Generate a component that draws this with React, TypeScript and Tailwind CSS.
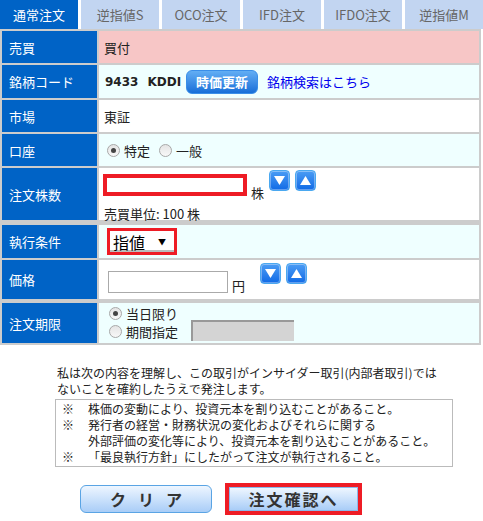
import React from 'react';

const tabs = ['通常注文', '逆指値S', 'OCO注文', 'IFD注文', 'IFDO注文', '逆指値M'];

const Radio: React.FC<{ checked?: boolean; label: string }> = ({ checked, label }) => (
    <span className="inline-flex items-center gap-[4px]">
        <span className="w-[13px] h-[13px] rounded-full border border-[#a8a8a8] bg-gradient-to-b from-[#e4e4e4] to-[#f8f8f8] flex items-center justify-center">
            {checked && <span className="w-[5px] h-[5px] rounded-full bg-[#444]" />}
        </span>
        <span>{label}</span>
    </span>
);

const Arrow: React.FC<{ up?: boolean }> = ({ up }) => (
    <span className="w-[21px] h-[21px] rounded-[4px] border border-[#4aa8f0] bg-gradient-to-b from-[#4a9cf4] to-[#0e6ae6] flex items-center justify-center shadow-[inset_0_0_0_1px_rgba(255,255,255,0.35)]">
        <svg width="11" height="9" viewBox="0 0 11 9">
            {up ? <polygon points="5.5,0 11,9 0,9" fill="white" /> : <polygon points="0,0 11,0 5.5,9" fill="white" />}
        </svg>
    </span>
);

const Label: React.FC<{ children: React.ReactNode }> = ({ children }) => (
    <div className="bg-[#0063c6] text-white text-[13px] pl-[7px] flex items-center">{children}</div>
);

export default function App() {
    return (
        <div className="w-[483px] h-[521px] bg-white text-[#222] font-['Noto_Sans_CJK_JP',sans-serif] text-[13px] leading-none overflow-hidden">
            <div className="flex gap-[3px] h-[29px]">
                {tabs.map((t, i) => (
                    <div
                        key={t}
                        className={`flex-1 flex items-center justify-center text-[13px] ${i === 0 ? 'bg-[#0063c6] text-white' : 'bg-[#c2d5f1] text-[#666]'}`}
                    >
                        {t}
                    </div>
                ))}
            </div>

            <div className="w-[481px] bg-[#cccccc] p-[2px] grid grid-cols-[95px_1fr] gap-[2px]">
                <Label>売買</Label>
                <div className="bg-[#f7c6c6] h-[32px] flex items-center pl-[5px]">買付</div>

                <Label>銘柄コード</Label>
                <div className="bg-[#efffff] h-[33px] flex items-center pl-[6px]">
                    <span className="font-['DejaVu_Sans',sans-serif] font-bold text-[12px] text-[#222]">9433</span>
                    <span className="ml-[9px] font-['DejaVu_Sans',sans-serif] font-bold text-[12px] text-[#222]">KDDI</span>
                    <span className="ml-[5px] w-[72px] h-[24px] rounded-[6px] border border-[#3a8ee8] bg-gradient-to-b from-[#62aef4] to-[#166ed8] text-white font-bold text-[13px] flex items-center justify-center">時価更新</span>
                    <span className="text-[#0000ee] ml-[9px]">銘柄検索はこちら</span>
                </div>

                <Label>市場</Label>
                <div className="bg-white h-[32px] flex items-center pl-[5px]">東証</div>

                <Label>口座</Label>
                <div className="bg-[#efffff] h-[32px] flex items-center pl-[8px] gap-[9px]">
                    <Radio checked label="特定" />
                    <Radio label="一般" />
                </div>

                <Label>注文株数</Label>
                <div className="bg-white h-[52px] pl-[4px] pt-[3px]">
                    <div className="flex items-start">
                        <div className="mt-[3px] w-[144px] h-[22px] border-[4px] border-[#ee1c25] bg-white" />
                        <span className="mt-[15px] ml-[4px]">株</span>
                        <div className="ml-[5px] -mt-[1px] flex gap-[5px]">
                            <Arrow />
                            <Arrow up />
                        </div>
                    </div>
                    <div className="mt-[8px] ml-[1px]">売買単位: 100 株</div>
                </div>
            </div>

            <div className="w-[481px] bg-[#cccccc] p-[2px] pt-[3px] grid grid-cols-[95px_1fr] gap-[2px]">
                <Label>執行条件</Label>
                <div className="bg-[#efffff] h-[33px] flex items-center pl-[8px]">
                    <div className="w-[70px] h-[27px] border-[3px] border-[#ee1c25] bg-white flex items-center justify-between pl-[3px] pr-[8px] shadow-[inset_0_-2px_0_#bbb]">
                        <span className="text-[16px] text-black">指値</span>
                        <span className="text-[8px] text-black">▼</span>
                    </div>
                </div>

                <Label>価格</Label>
                <div className="bg-white h-[39px] pl-[9px] flex items-start">
                    <div className="mt-[11px] w-[120px] h-[22px] border border-[#aaaaaa] bg-white" />
                    <span className="mt-[19px] ml-[4px]">円</span>
                    <div className="ml-[15px] mt-[3px] flex gap-[5px]">
                        <Arrow />
                        <Arrow up />
                    </div>
                </div>
            </div>

            <div className="w-[481px] bg-[#cccccc] p-[2px] grid grid-cols-[95px_1fr] gap-[2px]">
                <Label>注文期限</Label>
                <div className="bg-[#efffff] h-[40px] pl-[10px] flex items-start">
                    <div className="flex flex-col gap-[5px] pt-[4px]">
                        <Radio checked label="当日限り" />
                        <Radio label="期間指定" />
                    </div>
                    <div className="ml-[13px] mt-[17px] w-[103px] h-[21px] bg-[#d4d4d4] border-t-[2px] border-l-[2px] border-[#999999]" />
                </div>
            </div>

            <div className="ml-[57px] mt-[20px] text-[12px] leading-[16px] text-[#222]">
                私は次の内容を理解し、この取引がインサイダー取引(内部者取引)では
                <br />
                ないことを確約したうえで発注します。
            </div>
            <div className="ml-[55px] mt-[2px] w-[398px] border border-[#bbbbbb] px-[6px] py-[1px] text-[12px] leading-[16px]">
                <div className="flex"><span className="w-[26px]">※</span><span>株価の変動により、投資元本を割り込むことがあること。</span></div>
                <div className="flex"><span className="w-[26px]">※</span><span>発行者の経営・財務状況の変化およびそれらに関する<br />外部評価の変化等により、投資元本を割り込むことがあること。</span></div>
                <div className="flex"><span className="w-[26px]">※</span><span>「最良執行方針」にしたがって注文が執行されること。</span></div>
            </div>

            <div className="flex items-center mt-[16px] ml-[80px] gap-[13px]">
                <div className="w-[132px] h-[28px] rounded-[6px] border border-[#5aa4e4] bg-gradient-to-b from-[#eef6ff] to-[#a9cdf7] flex items-center justify-center text-[16px] font-bold text-[#333] tracking-[12px] pl-[12px]">
                    クリア
                </div>
                <div className="w-[137px] h-[32px] border-[4px] border-[#ee1c25] bg-white">
                    <div className="w-full h-full border border-[#8ab8ea] bg-gradient-to-b from-[#eef6ff] to-[#a9cdf7] flex items-center justify-center text-[16px] font-bold text-[#333] tracking-[2px]">
                        注文確認へ
                    </div>
                </div>
            </div>
        </div>
    );
}
